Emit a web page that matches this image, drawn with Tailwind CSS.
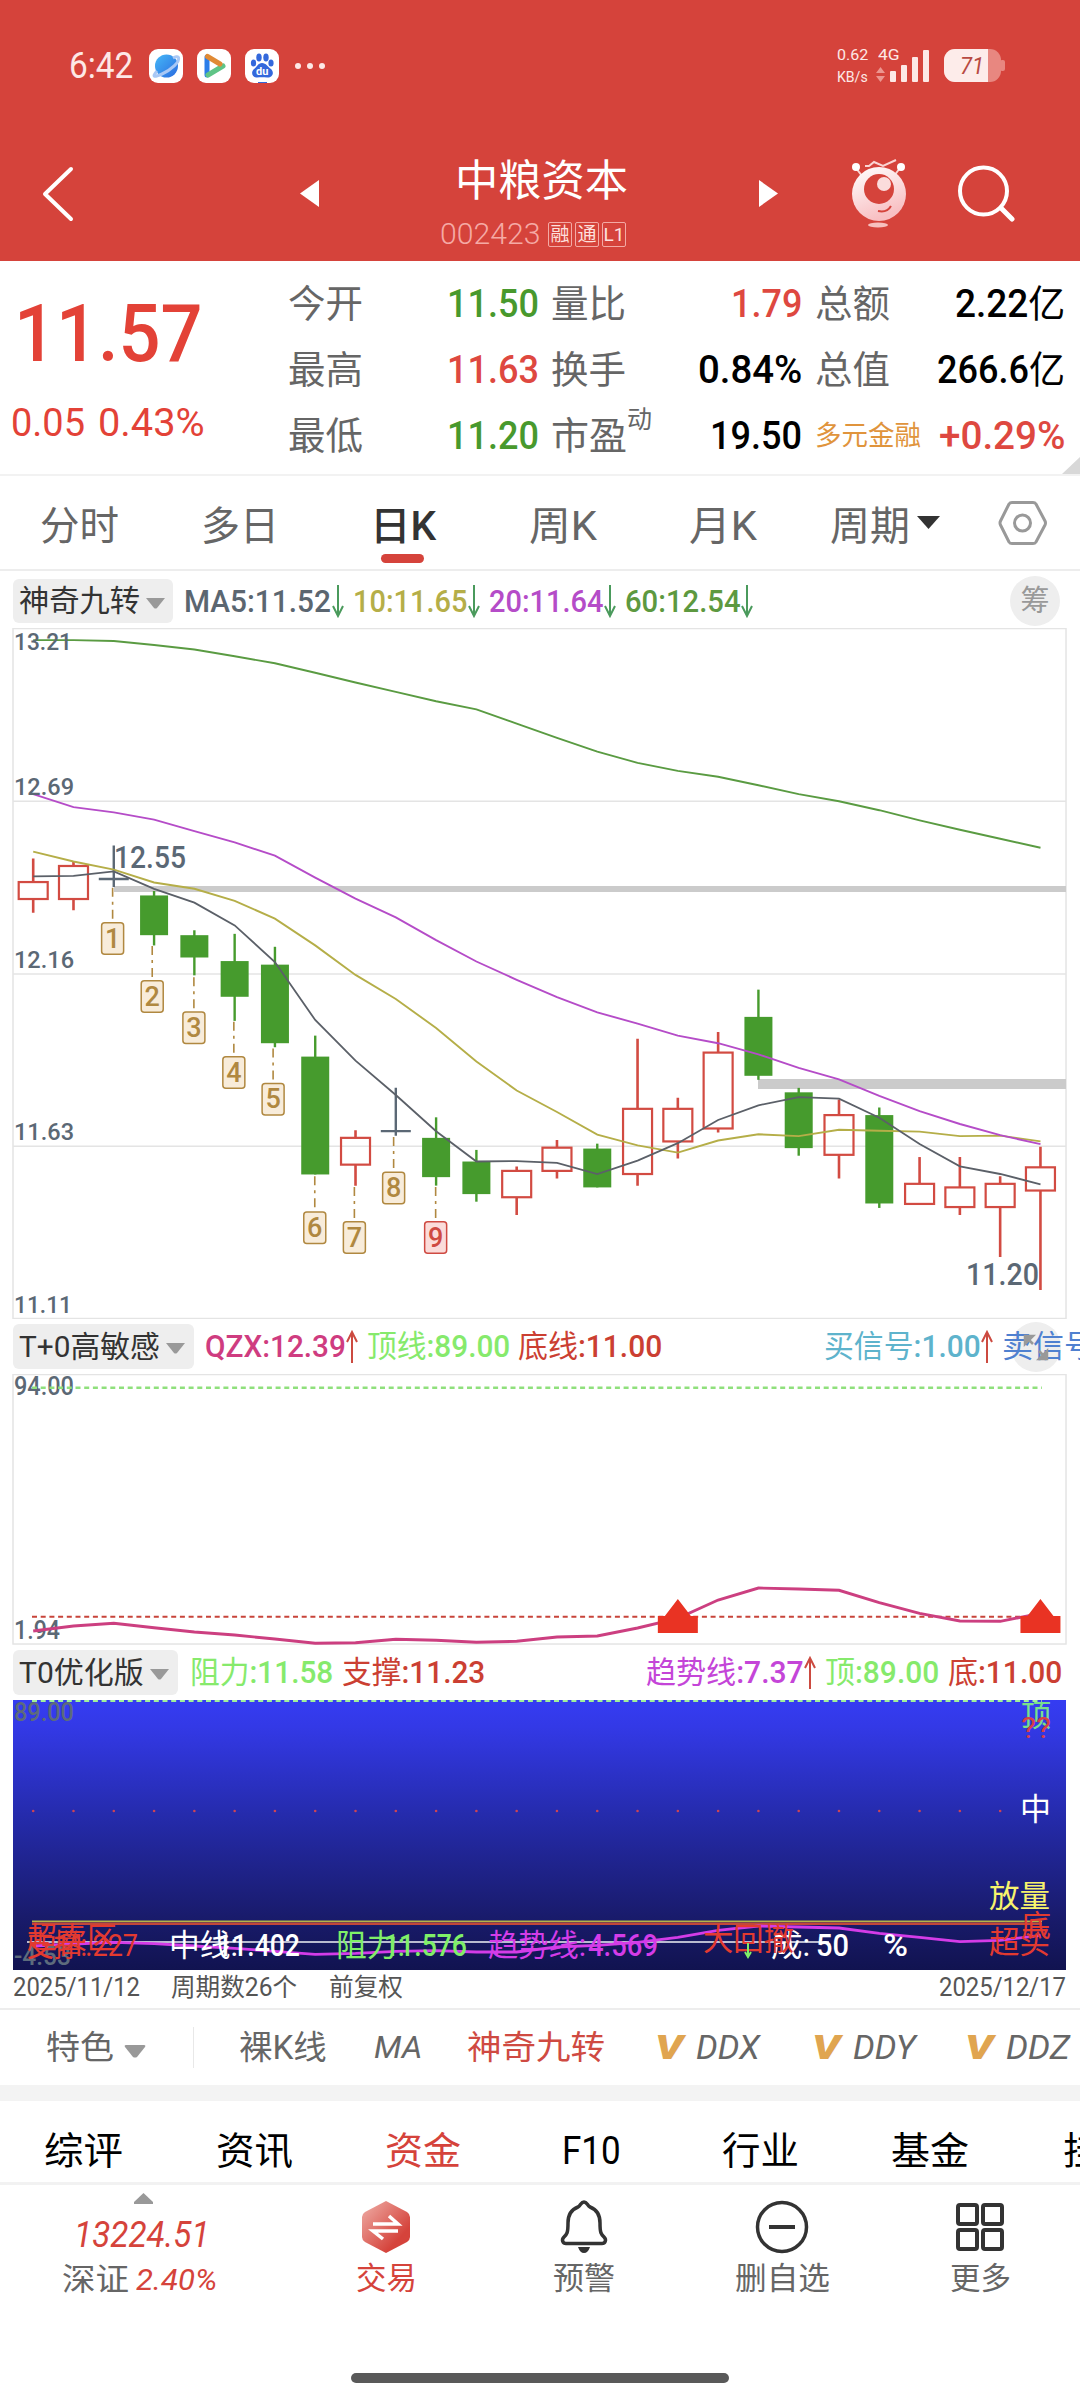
<!DOCTYPE html>
<html lang="zh-CN">
<head>
<meta charset="utf-8">
<title>中粮资本 002423</title>
<script src="https://cdn.jsdelivr.net/npm/@tailwindcss/browser@4"></script>
</head>
<body class="w-[1080px] h-[2400px] overflow-hidden bg-white leading-none whitespace-nowrap font-['Roboto','Noto_Sans_CJK_SC',sans-serif] text-[#666]">

<header class="h-[261px] bg-[#d5433b] text-white flex flex-col">
  <div class="h-[132px] flex items-center pl-[69px] text-[#fde8e6]">
    <span data-w="64" class="text-[36px]">6:42</span>
    <svg class="ml-[16px]" width="34" height="34" viewBox="0 0 34 34"><defs><linearGradient id="pl" x2="1" y2="1"><stop stop-color="#46b8f7"/><stop offset="1" stop-color="#2a6be0"/></linearGradient></defs><rect width="34" height="34" rx="9" fill="#fff"/><circle cx="17.500" cy="17" r="11.500" fill="url(#pl)"/><path d="M8 22C2 29 6 28 13 25C22 21 31 13 29.500 8.500C29 7 26 8 24 9" fill="none" stroke="#a9c8f5" stroke-width="3"/></svg>
    <svg class="ml-[14px]" width="34" height="34" viewBox="0 0 34 34"><rect width="34" height="34" rx="9" fill="#fff"/><path d="M10 8V26" stroke="#2b7de9" stroke-width="5" stroke-linecap="round"/><path d="M11 26L26 17" stroke="#5fc486" stroke-width="5" stroke-linecap="round"/><path d="M10.500 7.500L23 15" stroke="#e08a35" stroke-width="5" stroke-linecap="round"/></svg>
    <svg class="ml-[14px]" width="34" height="34" viewBox="0 0 34 34"><rect width="34" height="34" rx="9" fill="#fff"/><g fill="#3368dc"><ellipse cx="8.500" cy="14" rx="2.600" ry="3.600"/><ellipse cx="14" cy="8.500" rx="2.700" ry="4"/><ellipse cx="21" cy="8.500" rx="2.700" ry="4"/><ellipse cx="26" cy="14" rx="2.600" ry="3.600"/><path d="M17 14C13 14 12 18 9 20C5 24 8 29 12 28.500C16 28 18 28 22 28.500C27 29 30 24 26 20C23 18 21 14 17 14Z"/><path d="M13 33h9v1h-9z"/></g><text x="17.300" y="26" font-size="11" font-weight="700" fill="#fff" text-anchor="middle">du</text></svg>
    <svg class="ml-[15px]" width="34" height="10" viewBox="0 0 34 10" fill="#fde8e6"><circle cx="4" cy="5" r="3"/><circle cx="16" cy="5" r="3"/><circle cx="28" cy="5" r="3"/></svg>
    <div class="ml-[509px] flex flex-col gap-[7px] text-[15px]">
      <div class="flex gap-[10px]"><span data-w="31">0.62</span><span data-w="22">4G</span></div>
      <span data-w="31">KB/s</span>
    </div>
    <svg class="-ml-[24px]" width="56" height="34" viewBox="0 0 56 34"><g fill="#ec958f"><path d="M0 15L4.500 9L9 15ZM0 18L4.500 24L9 18Z" transform="translate(0 9)"/></g><g fill="#fde8e6"><rect x="14" y="22" width="6" height="11" rx="1"/><rect x="25" y="16" width="6" height="17" rx="1"/><rect x="36" y="8" width="6" height="25" rx="1"/><rect x="47" y="1" width="6" height="32" rx="1"/></g></svg>
    <svg class="ml-[12px]" width="62" height="34" viewBox="0 0 62 34"><rect width="57" height="33" rx="11" fill="#e88780"/><rect x="56" y="11" width="5" height="11" rx="2" fill="#e88780"/><path d="M11 0H44V33H11A11 11 0 0 1 0 22V11A11 11 0 0 1 11 0Z" fill="#fdecea"/><text x="16" y="25" font-size="24" textLength="24" lengthAdjust="spacingAndGlyphs" fill="#b84a42" font-style="italic">71</text></svg>
  </div>
  <div class="h-[129px] flex items-start">
    <svg class="mt-[33px] ml-[41px]" width="34" height="58" viewBox="0 0 34 58" fill="none" stroke="#fff" stroke-width="4" stroke-linecap="round" stroke-linejoin="round"><path d="M30 4L4 29L30 54"/></svg>
    <svg class="mt-[47px] ml-[225px]" width="19" height="29" fill="#fff"><path d="M19 1V28L0 14.500Z"/></svg>
    <div class="ml-[121px] w-[190px] mt-[28px] flex flex-col">
      <span data-w="173" class="ml-[15px] text-[43px]">中粮资本</span>
      <div class="mt-[17px] flex items-center text-[#f5aaa5]">
        <span data-w="101" class="text-[29px] font-light">002423</span>
        <div class="ml-[7px] flex gap-[3px] text-[19px] text-[#fde0de]">
          <span class="w-6 h-[25px] border border-[#f3aaa5] rounded-xs flex items-center justify-center">融</span>
          <span class="w-6 h-[25px] border border-[#f3aaa5] rounded-xs flex items-center justify-center">通</span>
          <span class="w-6 h-[25px] border border-[#f3aaa5] rounded-xs flex items-center justify-center">L1</span>
        </div>
      </div>
    </div>
    <svg class="mt-[47px] ml-[129px]" width="19" height="29" fill="#fff"><path d="M0 1V28L19 14.500Z"/></svg>
    <svg class="mt-[26px] ml-[71px]" width="58" height="70" viewBox="0 0 58 70"><defs><linearGradient id="eye" x2=".4" y2="1"><stop stop-color="#fff"/><stop offset="1" stop-color="#f8bfc2"/></linearGradient></defs><g stroke="#fbd5d3" stroke-width="2" fill="none"><path d="M7 10L13 18M51 10L45 18M16 8L20 8L25 4L34 8L47 2"/></g><circle cx="7" cy="9" r="4" fill="#fff"/><circle cx="52" cy="9" r="4" fill="#fff"/><circle cx="30" cy="36" r="27" fill="url(#eye)"/><circle cx="30" cy="31" r="15" fill="#d5433b"/><circle cx="35" cy="26" r="7" fill="#fbdcdc"/><path d="M29 53Q38 55 42 48" stroke="#d5433b" stroke-width="2" fill="none"/><ellipse cx="29" cy="67" rx="10" ry="2.500" fill="#f7c0be"/></svg>
    <svg class="mt-[31px] ml-[48px]" width="60" height="62" viewBox="0 0 60 62" fill="none" stroke="#fff" stroke-width="4"><circle cx="28.500" cy="28" r="23.500"/><path d="M46 45L57 56" stroke-width="5" stroke-linecap="round"/></svg>
  </div>
</header>

<section class="relative h-[215px] flex border-b-2 border-[#f2f2f2] text-black">
  <div class="w-[288px] pl-[14px] pt-[34px] text-[#e34237]">
    <div class="flex"><span data-w="189" class="text-[79px] font-medium">11.57</span></div>
    <div class="mt-[30px] -ml-[3px] flex gap-[13px] text-[39px]"><span data-w="74">0.05</span><span data-w="107">0.43%</span></div>
  </div>
  <div class="w-[263px] pt-[10px] text-[38px]">
    <div class="h-[66px] pr-[12px] flex items-center justify-between"><span data-w="75" class="text-[#666]">今开</span><span data-w="92" class="font-medium text-[#48992d]">11.50</span></div>
    <div class="h-[66px] pr-[12px] flex items-center justify-between"><span data-w="75" class="text-[#666]">最高</span><span data-w="92" class="font-medium text-[#de4840]">11.63</span></div>
    <div class="h-[66px] pr-[12px] flex items-center justify-between"><span data-w="75" class="text-[#666]">最低</span><span data-w="92" class="font-medium text-[#48992d]">11.20</span></div>
  </div>
  <div class="w-[264px] pt-[10px] text-[38px]">
    <div class="h-[66px] pr-[13px] flex items-center justify-between"><span data-w="75" class="text-[#666]">量比</span><span data-w="71" class="font-medium text-[#de4840]">1.79</span></div>
    <div class="h-[66px] pr-[13px] flex items-center justify-between"><span data-w="75" class="text-[#666]">换手</span><span data-w="104" class="font-medium">0.84%</span></div>
    <div class="h-[66px] pr-[13px] flex items-center justify-between"><div class="flex text-[#666]"><span data-w="76">市盈</span><span class="text-[25px] -mt-[10px]">动</span></div><span data-w="92" class="font-medium">19.50</span></div>
  </div>
  <div class="flex-1 pt-[10px] text-[38px]">
    <div class="h-[66px] pr-[15px] flex items-center justify-between"><span data-w="75" class="text-[#666]">总额</span><span data-w="110"><b class="font-medium">2.22</b>亿</span></div>
    <div class="h-[66px] pr-[15px] flex items-center justify-between"><span data-w="75" class="text-[#666]">总值</span><span data-w="128"><b class="font-medium">266.6</b>亿</span></div>
    <div class="h-[66px] pr-[15px] flex items-center justify-between"><span data-w="106" class="text-[27px] text-[#e0943c]">多元金融</span><span data-w="126" class="font-medium text-[#de4840]">+0.29%</span></div>
  </div>
  <svg class="absolute right-0 bottom-0" width="18" height="17" fill="#d8d8d8"><path d="M18 0V17H0Z"/></svg>
</section>

<nav class="h-[95px] flex items-center border-b-2 border-[#ededed] pl-[40px] text-[40px]">
  <span data-w="79" class="mt-[9px]">分时</span>
  <span data-w="78" class="mt-[9px] ml-[82px]">多日</span>
  <div class="relative ml-[91px] flex"><span data-w="66" class="mt-[9px] font-medium text-[#333]">日K</span><i class="absolute left-[11px] top-[56px] w-[43px] h-[9px] rounded-full bg-[#d5433b]"></i></div>
  <span data-w="68" class="mt-[9px] ml-[93px]">周K</span>
  <span data-w="68" class="mt-[9px] ml-[92px]">月K</span>
  <span data-w="80" class="mt-[9px] ml-[73px]">周期</span>
  <svg class="ml-[7px]" width="23" height="13" fill="#333"><path d="M0 0H23L11.500 13Z"/></svg>
  <svg class="ml-[58px]" width="50" height="46" viewBox="0 0 50 46" fill="none" stroke="#999" stroke-width="3"><path d="M14 2.500H35Q37 2.500 38 4L47 21Q48 23 47 25L38 42Q37 43.500 35 43.500H14Q12 43.500 11 42L2.500 25Q1.500 23 2.500 21L11 4Q12 2.500 14 2.500Z"/><circle cx="24.500" cy="23" r="8"/></svg>
</nav>

<section class="h-[57px] pt-[3px] flex items-center pl-[13px] text-[31px] font-medium">
  <div class="shrink-0 w-[160px] h-[44px] rounded-md bg-[#eee] flex items-center pl-[6px] text-[#333] font-normal"><span data-w="121" class="text-[30px]">神奇九转</span><svg class="ml-[6px] mt-1" width="19" height="11" fill="#999"><path d="M0 0H19L11 10Q9.500 11 8 10Z"/></svg></div>
  <span data-w="147" class="ml-[11px] text-[#5b6670]">MA5:11.52</span>
  <svg class="ml-[1px]" width="12" height="34" fill="none" stroke="#4a9a5c" stroke-width="2"><path d="M6 1V32M1 22L6 32L11 22"/></svg>
  <span data-w="115" class="ml-[9px] text-[#b5ae48]">10:11.65</span>
  <svg width="12" height="34" fill="none" stroke="#4a9a5c" stroke-width="2"><path d="M6 1V32M1 22L6 32L11 22"/></svg>
  <span data-w="115" class="ml-[9px] text-[#b54cc8]">20:11.64</span>
  <svg width="12" height="34" fill="none" stroke="#4a9a5c" stroke-width="2"><path d="M6 1V32M1 22L6 32L11 22"/></svg>
  <span data-w="116" class="ml-[9px] text-[#5d9940]">60:12.54</span>
  <svg width="12" height="34" fill="none" stroke="#4a9a5c" stroke-width="2"><path d="M6 1V32M1 22L6 32L11 22"/></svg>
  <div class="ml-[257px] w-[50px] h-[50px] rounded-full bg-[#eee] flex items-center justify-center text-[29px] font-normal text-[#999]">筹</div>
</section>

<svg id="kline" class="block" width="1080" height="691" viewBox="0 628 1080 691"></svg>

<section class="relative h-[55px] flex items-center pl-[13px] text-[31px] overflow-hidden">
  <div class="shrink-0 w-[181px] h-[45px] rounded-md bg-[#eee] flex items-center pl-[6px] text-[#333]"><span data-w="141" class="text-[30px]">T+0高敏感</span><svg class="ml-[6px] mt-1" width="19" height="11" fill="#999"><path d="M0 0H19L11 10Q9.500 11 8 10Z"/></svg></div>
  <span data-w="141" class="ml-[11px] text-[#cf3c80]"><b class="font-medium">QZX:12.39</b></span>
  <svg class="shrink-0" width="12" height="34" fill="none" stroke="#cc4a40" stroke-width="2"><path d="M6 33V2M1 12L6 2L11 12"/></svg>
  <span data-w="143" class="ml-[9px] text-[#86ea6c]">顶线<b class="font-medium">:89.00</b></span>
  <span data-w="144" class="ml-[8px] text-[#cb3f32]">底线<b class="font-medium">:11.00</b></span>
  <div class="absolute left-[1011px] top-[3px] w-[50px] h-[50px] rounded-full bg-[#eee]"></div>
  <div class="relative shrink-0 ml-[162px] flex items-center">
    <span data-w="157" class="text-[#5eb3cc]">买信号<b class="font-medium">:1.00</b></span>
    <svg width="12" height="34" fill="none" stroke="#cc4a40" stroke-width="2"><path d="M6 33V2M1 12L6 2L11 12"/></svg>
    <span class="ml-[9px] text-[31px] text-[#4f80d0]">卖信号</span>
  </div>
  <svg class="absolute left-[1022px] top-[14px]" width="28" height="29" fill="#999" stroke="#999" stroke-width="2.500"><path d="M3 11V3H11ZM17 26H25V18ZM3 3L11 11M17 18L25 26"/></svg>
</section>

<svg id="qzx" class="block" width="1080" height="271" viewBox="0 1374 1080 271"></svg>

<section class="h-[55px] flex items-center pl-[13px] text-[31px]">
  <div class="shrink-0 w-[165px] h-[45px] rounded-md bg-[#eee] flex items-center pl-[6px] text-[#333]"><span data-w="125" class="text-[30px]">T0优化版</span><svg class="ml-[6px] mt-1" width="19" height="11" fill="#999"><path d="M0 0H19L11 10Q9.500 11 8 10Z"/></svg></div>
  <span data-w="143" class="ml-[12px] text-[#86ea6c]">阻力<b class="font-medium">:11.58</b></span>
  <span data-w="143" class="ml-[9px] text-[#cb3f32]">支撑<b class="font-medium">:11.23</b></span>
  <span data-w="158" class="ml-[161px] text-[#c445d8]">趋势线<b class="font-medium">:7.37</b></span>
  <svg width="12" height="34" fill="none" stroke="#cc4a40" stroke-width="2"><path d="M6 33V2M1 12L6 2L11 12"/></svg>
  <span data-w="114" class="ml-[9px] text-[#86ea6c]">顶<b class="font-medium">:89.00</b></span>
  <span data-w="114" class="ml-[9px] text-[#cb3f32]">底<b class="font-medium">:11.00</b></span>
</section>

<svg id="t0" class="block" width="1080" height="271" viewBox="0 1700 1080 271"></svg>

<div class="h-[39px] flex items-center pl-[13px] pr-[14px] pb-[4px] text-[25px] text-[#555] border-b-2 border-[#ededed]">
  <span data-w="127">2025/11/12</span>
  <span data-w="126" class="ml-[31px]">周期数26个</span>
  <span data-w="74" class="ml-[32px]">前复权</span>
  <span data-w="127" class="ml-auto">2025/12/17</span>
</div>

<div class="h-[75px] flex items-center pl-[46px] text-[33px]">
  <span data-w="68">特色</span>
  <svg class="ml-[10px] mt-[8px]" width="22" height="13" fill="#999"><path d="M2 0H20Q22 0 21 2L13 12Q11 13 9 12L1 2Q0 0 2 0Z"/></svg>
  <i class="ml-[47px] w-[1px] h-[41px] bg-[#e8e8e8]"></i>
  <span data-w="88" class="ml-[45px]">裸K线</span>
  <span data-w="48" class="ml-[47px] italic text-[31px]">MA</span>
  <span data-w="138" class="ml-[45px] text-[#cf4a42]">神奇九转</span>
  <span data-w="28" class="ml-[50px] text-[#e0a550] font-black italic">V</span>
  <span data-w="64" class="ml-[13px] italic">DDX</span>
  <span data-w="28" class="ml-[52px] text-[#e0a550] font-black italic">V</span>
  <span data-w="63" class="ml-[13px] italic">DDY</span>
  <span data-w="28" class="ml-[49px] text-[#e0a550] font-black italic">V</span>
  <span data-w="64" class="ml-[13px] italic">DDZ</span>
</div>
<div class="h-[16px] bg-[#f3f3f3]"></div>
<div class="h-[84px] pt-[18px] flex items-center pl-[44px] overflow-hidden text-[38px] text-black border-b-3 border-[#f2f2f2]">
  <span data-w="79">综评</span>
  <span data-w="77" class="ml-[93px]">资讯</span>
  <span data-w="76" class="ml-[92px] text-[#d5433b]">资金</span>
  <span data-w="59" class="ml-[101px]">F10</span>
  <span data-w="77" class="ml-[101px]">行业</span>
  <span data-w="78" class="ml-[92px]">基金</span>
  <span data-w="38" class="ml-[94px]">挂</span>
</div>

<footer class="relative h-[215px] pl-[57px] pt-[8px] flex text-[31px]">
  <div class="w-[172px] flex flex-col items-center text-[#d5433b]">
    <svg width="19" height="11" fill="#999"><path d="M9.500 0L19 9V11H0V9Z"/></svg>
    <span data-w="136" class="mt-[13px] mr-[2px] text-[36px] italic">13224.51</span>
    <div class="mt-[11px] mr-[7px] flex items-center gap-[7px]"><span data-w="67" class="text-[#666]">深证</span><span data-w="81" class="text-[30px] italic">2.40%</span></div>
  </div>
  <div class="ml-[58px] w-[198px] flex flex-col items-center text-[#d5433b] pt-[7px]">
    <svg width="50" height="54" viewBox="0 0 50 54"><defs><linearGradient id="hex" x2="1" y2="1"><stop stop-color="#efb0a9"/><stop offset=".75" stop-color="#d5433b"/></linearGradient></defs><path d="M25 1L46 12Q49 14 49 17V37Q49 40 46 42L25 53L4 42Q1 40 1 37V17Q1 14 4 12Z" fill="url(#hex)"/><path d="M12 24H37L28 16M37 31H12L22 39" fill="none" stroke="#fff" stroke-width="3.500"/></svg>
    <span data-w="61" class="mt-[9px]">交易</span>
  </div>
  <div class="w-[198px] flex flex-col items-center pt-[7px]">
    <svg width="50" height="54" viewBox="0 0 50 54" fill="none" stroke="#333" stroke-width="3.500"><path d="M25 2C22 2 22 5 19 7C11 10 9 16 9 23C9 33 8 34 5 37C2 40 4 43.500 7 43.500H43C46 43.500 48 40 45 37C42 34 41 33 41 23C41 16 39 10 31 7C28 5 28 2 25 2Z"/><path d="M19 47H31Q29 53 25 53Q21 53 19 47Z" fill="#333" stroke="none"/></svg>
    <span data-w="62" class="mt-[9px]">预警</span>
  </div>
  <div class="w-[198px] flex flex-col items-center pt-[7px]">
    <svg width="54" height="54" viewBox="0 0 54 54" fill="none" stroke="#333" stroke-width="3.500"><circle cx="27" cy="27" r="24.500"/><path d="M14 27H40" stroke-width="4"/></svg>
    <span data-w="95" class="mt-[9px]">删自选</span>
  </div>
  <div class="w-[198px] flex flex-col items-center pt-[7px]">
    <svg width="48" height="54" viewBox="0 0 48 54" fill="none" stroke="#333" stroke-width="4"><rect x="2" y="5" width="19" height="19" rx="2"/><rect x="27" y="5" width="19" height="19" rx="2"/><rect x="2" y="30" width="19" height="19" rx="2"/><rect x="27" y="30" width="19" height="19" rx="2"/></svg>
    <span data-w="61" class="mt-[9px]">更多</span>
  </div>
  <div class="absolute left-[351px] top-[188px] w-[378px] h-[10px] rounded-full bg-[#595959]"></div>
</footer>

<script>
const X = i => 33.2 + 40.29 * i;
const r = v => Math.round(v * 10) / 10;
const line = (ys, f, c, w) => `<polyline points="${ys.map((v, i) => r(X(i)) + ',' + r(f(v))).join(' ')}" fill="none" stroke="${c}" stroke-width="${w}"/>`;
const txt = (x, y, s, size, c, w, o = '') => `<text x="${x}" y="${y}" font-size="${size}" fill="${c}" textLength="${w}" lengthAdjust="spacingAndGlyphs" ${o}>${s}</text>`;
const frame = (y, h) => `<rect x="13" y="${y}" width="1053" height="${h}" fill="none" stroke="#e4e4e4" stroke-width="1.5"/>`;
const med = 'font-weight="500"';

/* Daily candles: type (r = up, g = down, d = flat), high, body top, body bottom, low */
const K = v => 620 + v / 2.24;
const candles = [
 ['r',534,587,625,656],['r',542,551,625,650],['d',505,580,580,598],['g',607,617,706,729],['g',695,706,756,796],
 ['g',703,764,844,898],['g',732,772,948,957],['g',931,978,1242,1242],['r',1143,1160,1220,1267],['d',1048,1145,1145,1155],
 ['g',1114,1160,1248,1267],['g',1187,1213,1286,1303],['r',1224,1234,1293,1333],['r',1165,1182,1234,1251],['g',1173,1184,1271,1271],
 ['r',938,1095,1241,1267],['r',1070,1095,1168,1206],['r',923,969,1139,1148],['g',828,889,1021,1030],['g',1048,1058,1183,1200],
 ['r',1074,1109,1198,1251],['g',1092,1109,1307,1317],['r',1203,1263,1308,1308],['r',1203,1271,1315,1333],['r',1246,1263,1315,1427],['r',1180,1226,1278,1501]];
let k = frame(628.5, 690);
for (const y of [801.3, 974, 1146.3]) k += `<path d="M13 ${y}H1066" stroke="#e4e4e4" stroke-width="1.5"/>`;
k += '<path d="M114 889H1066" stroke="#cbcbcb" stroke-width="6"/><path d="M758 1084H1066" stroke="#cbcbcb" stroke-width="10"/>';
candles.forEach(([t, h, a, b, l], i) => {
  const x = X(i), H = K(h), A = K(a), B = K(b), L = K(l);
  if (t === 'g') k += `<path d="M${x} ${H}V${L}" stroke="#469b2d" stroke-width="2.4"/><rect x="${x - 14}" y="${A}" width="28" height="${B - A}" fill="#469b2d"/>`;
  else if (t === 'r') k += `<path d="M${x} ${H}V${A}M${x} ${B}V${L}" stroke="#d24b42" stroke-width="2.6"/><rect x="${x - 14.5}" y="${A}" width="29" height="${B - A}" fill="none" stroke="#d24b42" stroke-width="2.2"/>`;
  else k += `<path d="M${x} ${H}V${L}M${x - 15} ${A}H${x + 15}" stroke="#5b6875" stroke-width="2.4"/>`;
});
k += line([45,45,47,56,66,81,97,118,140,161,182,200,232,264,295,320,338,351,370,390,406,426,449,470,490,510], K, '#5a9b42', 1.9);
k += line([519,541,559,588,602,629,669,729,795,849,914,989,1054,1102,1153,1177,1193,1166,1152,1156,1142,1144,1146,1156,1155,1168], K, '#b5ae48', 1.9);
k += line([390,419,431,447,473,498,528,577,624,666,717,765,806,845,879,904,931,948,973,1003,1029,1066,1100,1129,1154,1174], K, '#b54cc8', 1.9);
k += line([574,573,563,602,633,684,766,896,987,1064,1145,1213,1212,1216,1241,1211,1172,1120,1087,1069,1072,1115,1174,1224,1241,1264], K, '#5b6068', 1.8);
[[327,677,600],[442,807,730],[563,877,800],[679,977,900],[793,1037,960],[914,1325,1246],[1029,1347,1270],[1143,1236,1158],[1265,1347,1270]].forEach(([x, y, s], i) => {
  const cx = x / 2.9037, red = i === 8, c = red ? '#cf4a42' : '#b08840';
  k += `<path d="M${cx} ${K(s)}V${K(y)}" stroke="#b08840" stroke-width="1.6" stroke-dasharray="9 5 3 5"/><rect x="${cx - 11}" y="${K(y) + .5}" width="22" height="31.500" rx="3" fill="${red ? '#fbdcda' : '#f8ecda'}" stroke="${c}" stroke-width="1.5"/><text x="${cx}" y="${K(y) + 25.5}" text-anchor="middle" font-size="27" font-weight="500" fill="${c}">${i + 1}</text>`;
});
const ax = '#5b6875';
[['13.21',649.5,58],['12.69',795,60],['12.16',968,60],['11.63',1140,60],['11.11',1313,58]].forEach(([s, y, w]) => k += txt(14, y, s, 24, ax, w, med));
k += txt(114, 867.5, '12.55', 30.5, ax, 72, med) + txt(966, 1284.5, '11.20', 30.5, ax, 73, med);
kline.innerHTML = k;

/* T+0 high sensitivity */
const Q = v => 1310 + v / 3;
const trend = [963,948,940,953,966,975,987,1000,998,988,991,997,994,981,978,954,925,870,834,837,841,878,910,933,934,910];
let q = frame(1374.5, 269.5) + txt(14, 1395, '94.00', 25, ax, 60, med) + txt(14, 1639, '1.94', 25, ax, 46, med);
q += '<path d="M32 1387.700H1042" stroke="#8fe07c" stroke-width="2.500" stroke-dasharray="5 3.700"/><path d="M32 1616.700H1042" stroke="#c8443a" stroke-width="2" stroke-dasharray="5 3.700"/>';
q += line(trend, Q, '#cc3f80', 2.9);
for (const i of [16, 25]) { const x = X(i); q += `<path d="M${x} 1599L${x + 13} 1616H${x + 20}V1633H${x - 20}V1616H${x - 13}Z" fill="#e93323"/>`; }
qzx.innerHTML = q;

/* T0 optimized */
const T = v => 1690 + v / 3;
let t = '<defs><linearGradient id="bg" x2="0" y2="1"><stop stop-color="#353cf2"/><stop offset=".1" stop-color="#3339e6"/><stop offset=".45" stop-color="#242aa8"/><stop offset=".8" stop-color="#191b6c"/><stop offset="1" stop-color="#111350"/></linearGradient></defs><rect x="13" y="1700" width="1053" height="270" fill="url(#bg)"/>';
t += txt(14, 1721, '89.00', 25, '#5d6b7c', 60, med);
t += '<path d="M32 1701H1042" stroke="#a0f09a" stroke-width="2" stroke-dasharray="5 3.700"/>';
for (let i = 0; i < 26; i++) t += `<circle cx="${X(i)}" cy="1811" r="1.3" fill="#cc4455"/>`;
t += '<path d="M32 1921.300H1042" stroke="#b5b548" stroke-width="1.800"/><path d="M32 1923.700H1042" stroke="#c2473a" stroke-width="2.600"/><path d="M27 1942H829" stroke="#b9bbd0" stroke-width="2"/>';
t += line([768,762,757,761,768,775,784,793,790,784,782,786,786,771,766,757,742,721,708,711,714,730,742,755,751,736], T, '#d43ce8', 2.8);
t += txt(14, 1965, '-4.53', 25, '#5d6b7c', 57, med);
const R = '#e33a30', P = '#d43ce8', G = '#7fef68';
t += txt(27, 1948, '超卖区', 30, R, 90) + txt(27, 1956, '支撑:', 31, R, 60) + txt(55, 1956, '11.227', 31, R, 83);
t += txt(169, 1956, '中线:', 31, '#fff', 69) + txt(217, 1956, '11.402', 31, '#fff', 83, med);
t += txt(336, 1956, '阻力:', 31, G, 69) + txt(384, 1956, '11.576', 31, G, 83, med);
t += txt(488, 1956, '趋势线:', 31, P, 98) + txt(588, 1956, '4.569', 31, P, 70, med);
t += txt(771, 1956, '成:', 31, '#fff', 39) + txt(816, 1956, '50', 31, '#fff', 33, med) + txt(883, 1956, '%', 31, '#fff', 25, med);
t += txt(703, 1950, '大回撤', 31, R, 91) + '<path d="M748 1943V1956M745 1952L748 1957L751 1952" stroke="#7fef68" stroke-width="2" fill="none"/>';
t += txt(1021, 1726, '顶', 30, '#79e08c', 30) + txt(1021, 1738, '??', 30, '#d83f48', 30) + txt(1020, 1820, '中', 31, '#fff', 31);
t += txt(989, 1907, '放量', 31, '#f7f36c', 61) + txt(1021, 1936, '底', 30, R, 30) + txt(989, 1953, '超买', 31, R, 61);
t0.innerHTML = t;

/* Condense each label to its column width, again whenever its font size settles */
const fit = new ResizeObserver(es => es.forEach(({ target: s }) => {
  s.style.transform = `scaleX(${s.parentNode.dataset.w / s.offsetWidth})`;
}));
document.querySelectorAll('[data-w]').forEach(e => {
  const s = document.createElement('span');
  s.append(...e.childNodes);
  s.style.display = 'inline-block';
  s.style.transformOrigin = '0 50%';
  e.appendChild(s);
  e.style.display = 'block';
  e.style.flexShrink = 0;
  e.style.width = e.dataset.w + 'px';
  fit.observe(s);
});
</script>
</body>
</html>
